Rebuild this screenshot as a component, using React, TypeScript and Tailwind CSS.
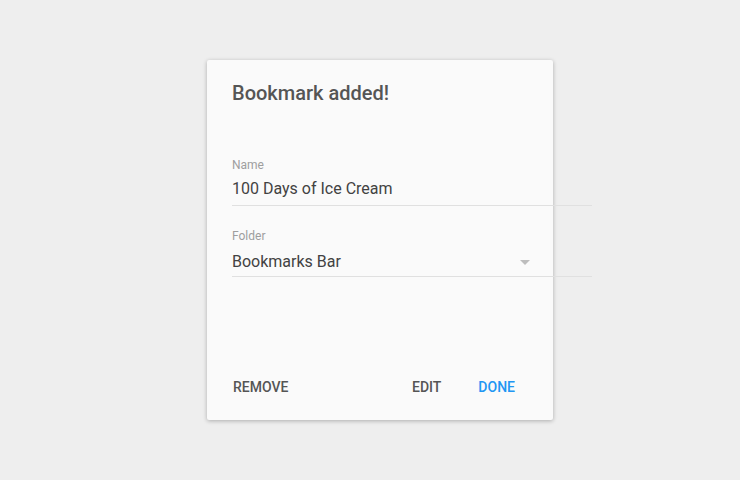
import React from "react";

export default function App() {
  return (
    <div className="w-[740px] h-[480px] bg-[#eeeeee] pt-[60px] pl-[207px] overflow-hidden" style={{ fontFamily: "Roboto, 'Liberation Sans', sans-serif" }}>
      <div className="w-[346px] h-[360px] bg-[#fafafa] rounded-[2px] shadow-[0_1px_4px_rgba(0,0,0,0.28)] flex flex-col">
        <div className="pl-[25px] pt-[21px]">
          <h1 className="text-[20px] leading-[24px] font-medium text-[#555555]">Bookmark added!</h1>
          <div className="mt-[52px] w-[360px] border-b border-[#e0e0e0] pb-[6px]">
            <div className="text-[12px] leading-[16px] text-[#9e9e9e]">Name</div>
            <div className="mt-[6px] text-[16px] leading-[20px] text-[#424242]">100 Days of Ice Cream</div>
          </div>
          <div className="mt-[22px] w-[360px] border-b border-[#e0e0e0] pb-[4px]">
            <div className="text-[12px] leading-[16px] text-[#9e9e9e]">Folder</div>
            <div className="mt-[8px] w-[298px] flex items-center justify-between">
              <span className="text-[16px] leading-[20px] text-[#424242]">Bookmarks Bar</span>
              <svg width="10" height="5" viewBox="0 0 10 5">
                <path d="M0 0 L10 0 L5 5 Z" fill="#bdbdbd" />
              </svg>
            </div>
          </div>
        </div>
        <div className="mt-auto pb-[23px] pl-[25px] pr-[38px] flex justify-between text-[14px] leading-[20px] font-medium">
          <button className="text-[#555555] ml-[1px]">REMOVE</button>
          <div className="flex gap-[37px]">
            <button className="text-[#555555]">EDIT</button>
            <button className="text-[#2196f3]">DONE</button>
          </div>
        </div>
      </div>
    </div>
  );
}
